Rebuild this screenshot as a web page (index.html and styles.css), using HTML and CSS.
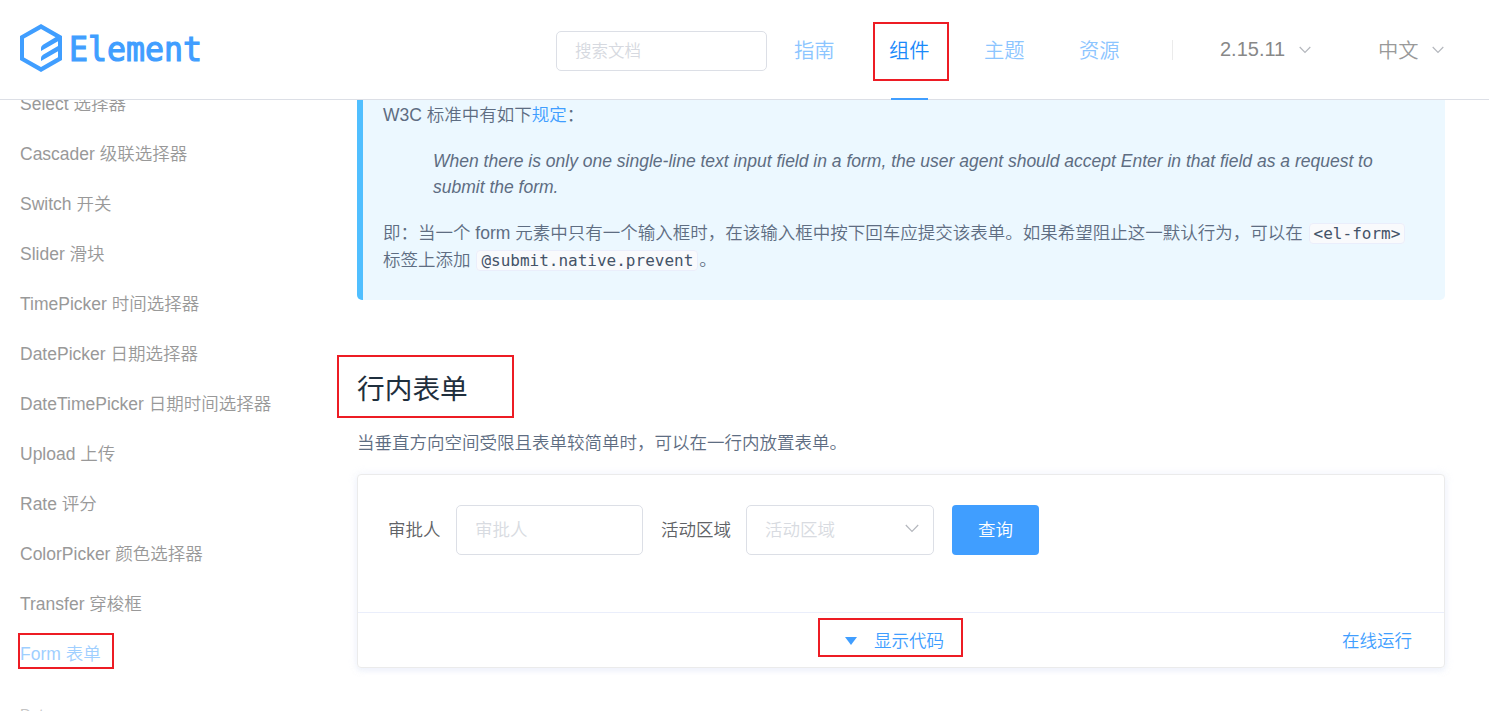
FILE: index.html
```html
<!DOCTYPE html>
<html lang="zh-CN">
<head>
<meta charset="utf-8">
<title>Element</title>
<link rel="stylesheet" href="styles.css">
</head>
<body>
<header class="header">
  <a class="logo">
    <svg class="logo-mark" width="42" height="48" viewBox="0 0 42 48">
      <path d="M21 0 42 12V36L21 48 0 36V12ZM21 5 4 14.6V33.4L21 43 38 33.3V27.2L21 37V34Q21 32 23 30.8L38 22V17.2L21 27V24Q21 22 23 20.8L35.5 13.2Z" fill="#409eff" fill-rule="evenodd"/>
    </svg>
    <svg class="logo-word" width="134" height="34" viewBox="0 0 134 34">
      <text x="0" y="32.5" textLength="133" lengthAdjust="spacingAndGlyphs">Element</text>
    </svg>
  </a>
  <div class="search">搜索文档</div>
  <nav class="nav">
    <a>指南</a>
    <a class="active">组件<span class="mark mark-nav"></span></a>
    <a>主题</a>
    <a>资源</a>
  </nav>
  <span class="divider"></span>
  <span class="pick version">2.15.11<svg width="12" height="8" viewBox="0 0 12 8"><path d="M.7 1 6 6.3 11.3 1"/></svg></span>
  <span class="pick lang"><span class="lang-text">中文</span><svg width="12" height="8" viewBox="0 0 12 8"><path d="M.7 1 6 6.3 11.3 1"/></svg></span>
</header>
<div class="page">
  <aside class="side">
    <a>Select 选择器</a>
    <a>Cascader 级联选择器</a>
    <a>Switch 开关</a>
    <a>Slider 滑块</a>
    <a>TimePicker 时间选择器</a>
    <a>DatePicker 日期选择器</a>
    <a>DateTimePicker 日期时间选择器</a>
    <a>Upload 上传</a>
    <a>Rate 评分</a>
    <a>ColorPicker 颜色选择器</a>
    <a>Transfer 穿梭框</a>
    <a class="current">Form 表单<span class="mark mark-side"></span></a>
    <div class="group">Data</div>
  </aside>
  <main class="content">
    <div class="tip">
      <p>W3C 标准中有如下<a>规定</a>：</p>
      <blockquote>When there is only one single-line text input field in a form, the user agent should accept Enter in that field as a request to<br>submit the form.</blockquote>
      <p class="note">即：当一个 form 元素中只有一个输入框时，在该输入框中按下回车应提交该表单。如果希望阻止这一默认行为，可以在 <code>&lt;el-form&gt;</code><br>标签上添加 <code>@submit.native.prevent</code>。</p>
    </div>
    <h3>行内表单<span class="mark mark-title"></span></h3>
    <p class="intro">当垂直方向空间受限且表单较简单时，可以在一行内放置表单。</p>
    <section class="demo">
      <div class="form">
        <label>审批人</label>
        <div class="field">审批人</div>
        <label class="second">活动区域</label>
        <div class="field select">活动区域<svg width="14" height="9" viewBox="0 0 14 9"><path d="M.8 1 7 7.4 13.2 1"/></svg></div>
        <button class="query">查询</button>
      </div>
      <div class="control">
        <span class="toggle"><i class="caret"></i>显示代码<span class="mark mark-toggle"></span></span>
        <a class="run">在线运行</a>
      </div>
    </section>
  </main>
</div>
</body>
</html>
```
FILE: styles.css
```css
* { box-sizing: border-box; }
body {
  margin: 0;
  height: 711px;
  overflow: hidden;
  background: #fff;
  color: #5e6d82;
  font: 350 17.5px "Liberation Sans", "Noto Sans CJK SC", sans-serif;
  white-space: nowrap;
}
.header {
  display: flex;
  align-items: center;
  height: 100px;
  padding-left: 20px;
  border-bottom: 1px solid #dcdfe6;
}
.logo { display: flex; width: 536px; }
.logo-mark { margin-top: -3px; }
.logo-word { margin: 1px 0 0 7px; overflow: visible; }
.logo-word text {
  font: 400 34px "DejaVu Sans Mono", monospace;
  fill: #409eff;
  stroke: #409eff;
  stroke-width: 1.2;
}
.search {
  width: 211px;
  height: 40px;
  margin-top: 3px;
  padding-left: 18px;
  border: 1px solid #dcdfe6;
  border-radius: 5px;
  line-height: 39px;
  font-size: 16.5px;
  color: #d6d9e0;
}
.nav { display: flex; height: 100px; margin-left: 27px; gap: 54px; }
.nav a {
  position: relative;
  width: 41px;
  line-height: 102px;
  font-size: 20.3px;
  color: #8cc5ff;
}
.nav .active { color: #1989fa; }
.nav .active::after {
  content: "";
  position: absolute;
  left: 2px;
  bottom: 0;
  width: 37px;
  height: 2px;
  background: #409eff;
}
.mark { position: absolute; border: 2px solid #ed1c24; }
.mark-nav { left: -16px; top: 22px; width: 76px; height: 59px; }
.divider { width: 1px; height: 20px; margin-left: 52px; background: #ebebeb; }
.pick { display: flex; align-items: center; font-size: 20px; color: #888; }
.pick svg, .select svg { fill: none; stroke: #b4b7bd; stroke-width: 1.2; }
.version { margin-left: 47px; width: 91px; justify-content: space-between; }
.lang { margin-left: 67px; width: 66px; justify-content: space-between; color: #999; font-size: 20.3px; }
.lang-text { padding-bottom: 2px; }
.page { display: flex; height: 611px; overflow: hidden; }
.side { width: 357px; margin-top: -21px; padding-left: 20px; color: #999; }
.side a { display: block; position: relative; height: 50px; line-height: 50px; }
.side .current { color: #9fcfff; }
.mark-side { left: -2px; top: 4px; width: 96px; height: 36px; }
.group { margin-top: 18px; font-size: 15px; line-height: 34px; color: #c4c4c4; }
.content { width: 1088px; }
.tip {
  height: 200px;
  padding: 2px 20px 0;
  border-left: 6px solid #50bfff;
  border-radius: 0 0 5px 5px;
  background: #ecf8ff;
  line-height: 26.25px;
}
.tip p { margin: 0; }
.tip .note { line-height: 27px; }
.tip a { color: #409eff; }
.tip blockquote { margin: 19.5px 0 19.5px 50px; font-style: italic; }
code {
  margin: 0 1px;
  padding: 0 4px;
  border: 1px solid #eaeefb;
  border-radius: 4px;
  background: #f9fafc;
  color: #445368;
  font: 16px "DejaVu Sans Mono", monospace;
}
h3 {
  position: relative;
  margin: 70px 0 0;
  line-height: 40px;
  font-size: 27.7px;
  font-weight: 400;
  color: #1f2f3d;
}
.mark-title { left: -20px; top: -15px; width: 177px; height: 63px; }
.intro { margin: 20px 0 0; line-height: 26px; }
.demo {
  height: 194px;
  margin-top: 18px;
  border: 1px solid #ebebeb;
  border-radius: 4px;
  box-shadow: 0 0 10px rgba(232,237,250,.6), 0 3px 5px rgba(232,237,250,.5);
}
.form { display: flex; height: 137px; padding: 30px 0 0 30px; }
.form label { width: 68px; line-height: 50px; color: #606266; }
.form .second { width: 85px; margin-left: 18px; }
.field {
  display: flex;
  align-items: center;
  justify-content: space-between;
  width: 187px;
  height: 50px;
  padding: 0 14px 3px 18px;
  border: 1px solid #dcdfe6;
  border-radius: 5px;
  color: #d8dbe1;
}
.select { width: 188px; }
.query {
  width: 87px;
  height: 50px;
  margin-left: 18px;
  padding: 0 0 4px;
  border: 0;
  border-radius: 4px;
  background: #409eff;
  color: #fff;
  font: inherit;
}
.control {
  display: flex;
  align-items: center;
  justify-content: space-between;
  height: 55px;
  padding: 0 32px 1px 487px;
  border-top: 1px solid #eaeefb;
  color: #409eff;
}
.toggle { display: flex; align-items: center; gap: 17px; position: relative; }
.caret {
  margin-top: 3px;
  border: 6.5px solid transparent;
  border-top: 8px solid #409eff;
  border-bottom: 0;
}
.mark-toggle { left: -27px; top: -9px; width: 145px; height: 39px; }
```
